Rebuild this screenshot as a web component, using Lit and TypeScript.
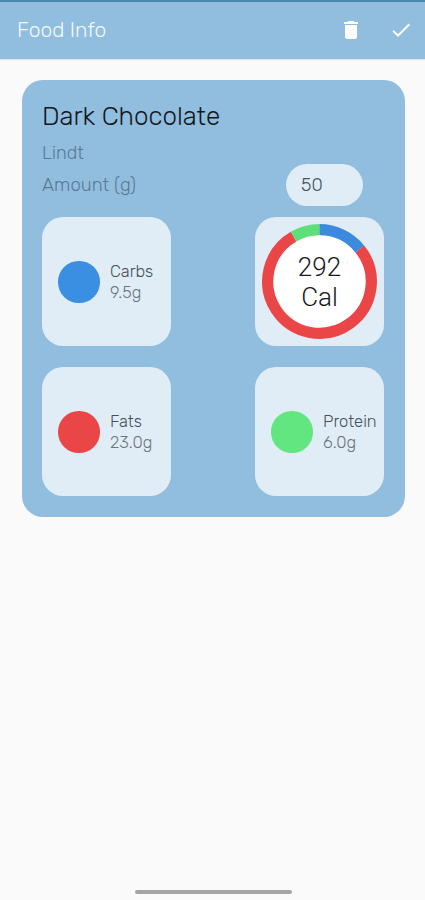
import { LitElement, html, css, svg } from "lit";
import { customElement, property } from "lit/decorators.js";

@customElement("calorie-ring")
class CalorieRing extends LitElement {
  @property({ type: Number }) calories = 0;

  static styles = css`
    :host { display: grid; width: 115px; height: 115px; }
    svg, .label { grid-area: 1 / 1; }
    .label {
      place-self: center;
      text-align: center;
      font: 350 26px/30px Roboto, sans-serif;
      color: #16191b;
    }
  `;

  private arc(from: number, to: number, color: string) {
    const r = 51.8;
    const pt = (deg: number) => {
      const a = (deg * Math.PI) / 180;
      return `${(57.5 + r * Math.sin(a)).toFixed(2)} ${(57.5 - r * Math.cos(a)).toFixed(2)}`;
    };
    return svg`<path d="M${pt(from)}A${r} ${r} 0 ${to - from > 180 ? 1 : 0} 1 ${pt(to)}" stroke=${color} />`;
  }

  render() {
    return html`
      <svg width="115" height="115" viewBox="0 0 115 115" fill="none" stroke-width="11.2">
        <circle cx="57.5" cy="57.5" r="47" fill="#fff" stroke="none" />
        ${this.arc(51, 330, "#ea4648")}
        ${this.arc(330, 360, "#5ce077")}
        ${this.arc(0, 51, "#3b8ade")}
      </svg>
      <div class="label">${this.calories}<br />Cal</div>
    `;
  }
}

@customElement("nutrient-tile")
class NutrientTile extends LitElement {
  @property() name = "";
  @property() amount = "";
  @property() color = "";

  static styles = css`
    :host { display: flex; align-items: center; gap: 10.5px; padding-left: 16px; }
    .dot { width: 41.5px; height: 41.5px; border-radius: 50%; flex: none; }
    .text { padding-top: 1px; font: 300 16.6px/21.5px Rubik, Roboto, sans-serif; white-space: nowrap; }
    .name { color: #465058; }
    .amount { color: #6d767e; }
  `;

  render() {
    return html`
      <div class="dot" style="background:${this.color}"></div>
      <div class="text">
        <div class="name">${this.name}</div>
        <div class="amount">${this.amount}</div>
      </div>
    `;
  }
}

@customElement("app-root")
class AppRoot extends LitElement {
  static styles = css`
    :host {
      display: flex;
      flex-direction: column;
      height: 900px;
      box-sizing: border-box;
      background: #fafafa;
      font-family: Rubik, Roboto, sans-serif;
      font-weight: 300;
    }
    header {
      display: flex;
      align-items: center;
      height: 59px;
      box-sizing: border-box;
      padding: 0 12px 0 17px;
      border-top: 2px solid #4a88ad;
      background: #91bddf;
      box-shadow: 0 1px 1px #dfe3ee;
      color: #f3f9fd;
      flex: none;
    }
    h1 { flex: 1; margin: 0; padding-bottom: 2px; font-size: 21px; line-height: 26px; font-weight: 300; }
    .actions { display: flex; gap: 26px; padding-bottom: 1px; }
    .actions svg { display: block; fill: #fff; }
    .card {
      margin: 21px 20px 0 21.5px;
      height: 437px;
      box-sizing: border-box;
      padding: 20.5px 21px 20px 20.5px;
      border-radius: 21px;
      background: #91bddf;
    }
    h2 { margin: 0; font-size: 26px; line-height: 32px; font-weight: 300; color: #11171c; }
    .brand { font-size: 18.2px; line-height: 22px; margin-top: 9px; color: #587a93; }
    .row { display: flex; justify-content: space-between; align-items: center; height: 42px; }
    .row .label { padding-top: 1px; font-size: 18.6px; color: #587a93; }
    .input {
      width: 77.5px;
      height: 42px;
      box-sizing: border-box;
      padding-left: 15.5px;
      margin-right: 21px;
      border-radius: 21px;
      background: #e0edf7;
      color: #46535d;
      font-size: 18.3px;
      line-height: 42px;
    }
    .tiles {
      display: grid;
      grid-template-columns: 129px 129px;
      grid-auto-rows: 129.3px;
      justify-content: space-between;
      row-gap: 20.7px;
      margin-top: 11.7px;
    }
    .tile { border-radius: 21px; background: #e0edf7; }
    .ring { display: grid; place-items: center; }
    .home {
      width: 157px;
      height: 4px;
      margin: auto auto 6px 134.5px;
      border-radius: 2px;
      background: #a5a5a5;
    }
  `;

  render() {
    return html`
      <header>
        <h1>Food Info</h1>
        <div class="actions">
          <svg width="24" height="24" viewBox="0 0 24 24">
            <path d="M6 19c0 1.1.9 2 2 2h8c1.1 0 2-.9 2-2V7H6v12zM19 4h-3.5l-1-1h-5l-1 1H5v2h14V4z" />
          </svg>
          <svg width="24" height="24" viewBox="0 0 24 24">
            <path d="M9 16.2 4.8 12l-1.4 1.4L9 19 21 7l-1.4-1.4L9 16.2z" />
          </svg>
        </div>
      </header>
      <main class="card">
        <h2>Dark Chocolate</h2>
        <div class="brand">Lindt</div>
        <div class="row">
          <span class="label">Amount (g)</span>
          <div class="input">50</div>
        </div>
        <div class="tiles">
          <nutrient-tile class="tile" name="Carbs" amount="9.5g" color="#3b8fe2"></nutrient-tile>
          <div class="tile ring"><calorie-ring .calories=${292}></calorie-ring></div>
          <nutrient-tile class="tile" name="Fats" amount="23.0g" color="#ea4648"></nutrient-tile>
          <nutrient-tile class="tile" name="Protein" amount="6.0g" color="#62e67f"></nutrient-tile>
        </div>
      </main>
      <div class="home"></div>
    `;
  }
}
